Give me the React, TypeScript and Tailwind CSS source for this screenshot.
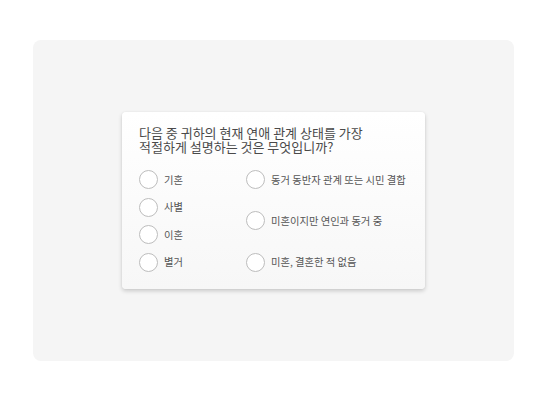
import React from "react";

const Radio = ({ label }: { label: string }) => (
  <div className="flex items-center h-[18px]">
    <span className="w-[19px] h-[19px] shrink-0 rounded-full border border-[#bdbdbd] bg-white" />
    <span className="ml-[6px] text-[10.3px] leading-[14px] text-[#555] whitespace-nowrap">{label}</span>
  </div>
);

export default function App() {
  return (
    <div
      className="w-[547px] h-[400px] bg-white flex items-center justify-center"
      style={{ fontFamily: '"Noto Sans CJK KR", "Noto Sans", sans-serif' }}
    >
      <div className="w-[481px] h-[321px] rounded-[8px] bg-[#f5f5f5] flex items-center justify-center">
        <div className="w-[303px] h-[177px] rounded-[4px] bg-gradient-to-b from-white to-[#f7f7f7] shadow-[0_2px_4px_rgba(0,0,0,0.18),0_0_2px_rgba(0,0,0,0.06)] px-[17px] pt-[14px]">
          <p className="text-[13px] leading-[14px] text-[#4a4a4a]">
            다음 중 귀하의 현재 연애 관계 상태를 가장
            <br />
            적절하게 설명하는 것은 무엇입니까?
          </p>
          <div className="mt-[17px] flex">
            <div className="w-[107px] shrink-0 flex flex-col gap-[9.67px]">
              <Radio label="기혼" />
              <Radio label="사별" />
              <Radio label="이혼" />
              <Radio label="별거" />
            </div>
            <div className="flex flex-col justify-between">
              <Radio label="동거 동반자 관계 또는 시민 결합" />
              <Radio label="미혼이지만 연인과 동거 중" />
              <Radio label="미혼, 결혼한 적 없음" />
            </div>
          </div>
        </div>
      </div>
    </div>
  );
}
